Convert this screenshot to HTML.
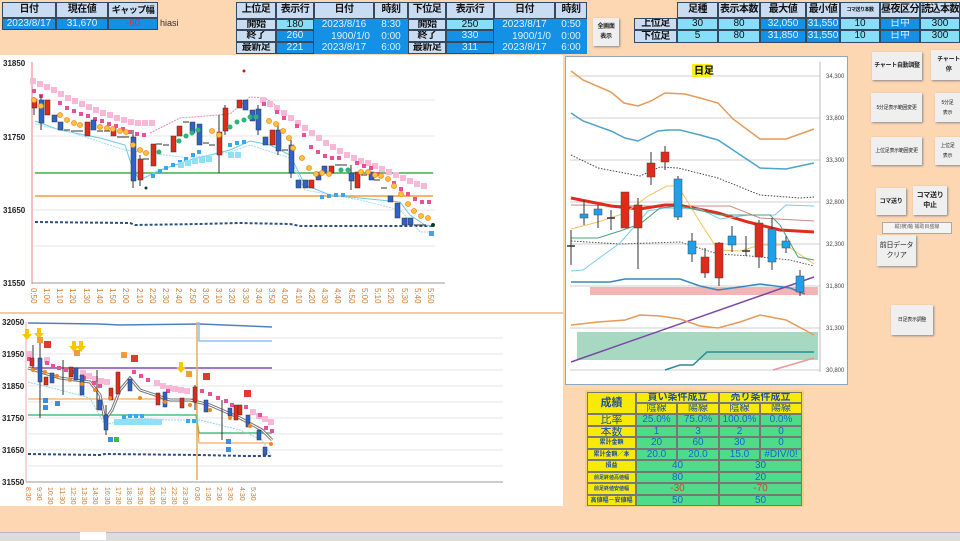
<!DOCTYPE html>
<html><head><meta charset="utf-8">
<style>
*{margin:0;padding:0}
body{width:960px;height:540px;background:#fdd6b2;position:relative;overflow:hidden;font-family:"Liberation Sans","Noto Sans CJK JP",sans-serif}
.c{position:absolute;box-sizing:border-box;font-size:10px;text-align:center;border:1px solid #34495e;white-space:nowrap;overflow:hidden}
.h{background:#c9dcf2;color:#111;font-weight:bold;font-size:10px;line-height:14px;letter-spacing:-0.5px}
.b{background:#1490e4;color:#dff1ff;line-height:10px}
.l{background:#86def8;color:#111;line-height:10px}
.btn{position:absolute;background:#efefef;box-shadow:1px 1px 2px #888;font-size:7px;text-align:center;color:#222;display:flex;align-items:center;justify-content:center;line-height:10px;font-weight:bold;white-space:nowrap;overflow:hidden;letter-spacing:-0.3px}
.t{position:absolute;box-sizing:border-box;border:1px solid #777;text-align:center;font-size:10px;color:#1d63c8;line-height:10px;overflow:hidden;white-space:nowrap}
.y{background:#f7ea08;color:#1d4fa0;font-weight:bold}
.g{background:#4fdc8a}
</style></head><body>
<div style="position:absolute;left:0;top:55px;width:563px;height:451px;background:#fff"></div>
<div style="position:absolute;left:0;top:312px;width:563px;height:2px;background:#f3c9a6"></div>
<div style="position:absolute;left:565px;top:56px;width:283px;height:329px;background:#fff;border:1px solid #8fa8c0;box-sizing:border-box"></div>
<div style="position:absolute;left:0;top:532px;width:960px;height:8px;background:#dcdcdc;border-top:1px solid #bbb"></div>
<div style="position:absolute;left:80px;top:532px;width:26px;height:8px;background:#fff"></div>

<div class="c h" style="left:2px;top:2px;width:54px;height:16px">日付</div>
<div class="c h" style="left:56px;top:2px;width:52px;height:16px">現在値</div>
<div class="c h" style="left:108px;top:2px;width:50px;height:16px;font-size:9px">ギャップ幅</div>
<div class="c b" style="left:2px;top:18px;width:54px;height:12px">2023/8/17</div>
<div class="c b" style="left:56px;top:18px;width:52px;height:12px">31,670</div>
<div class="c b" style="left:108px;top:18px;width:50px;height:12px;color:#e03030">-60</div>
<div style="position:absolute;left:160px;top:18px;font-size:9px;color:#333">hiasi</div>

<div class="c h" style="left:236px;top:2px;width:40px;height:17px">上位足</div>
<div class="c h" style="left:276px;top:2px;width:38px;height:17px">表示行</div>
<div class="c h" style="left:314px;top:2px;width:60px;height:17px">日付</div>
<div class="c h" style="left:374px;top:2px;width:34px;height:17px">時刻</div>
<div class="c h" style="left:408px;top:2px;width:38px;height:17px">下位足</div>
<div class="c h" style="left:446px;top:2px;width:48px;height:17px">表示行</div>
<div class="c h" style="left:494px;top:2px;width:61px;height:17px">日付</div>
<div class="c h" style="left:555px;top:2px;width:32px;height:17px">時刻</div>

<div class="c h" style="left:236px;top:19px;width:40px;height:11px;line-height:9px">開始</div>
<div class="c l" style="left:276px;top:19px;width:38px;height:11px;line-height:9px">180</div>
<div class="c b" style="left:314px;top:19px;width:94px;height:35px;border:none"></div>
<div class="c h" style="left:236px;top:30px;width:40px;height:12px;line-height:10px">終了</div>
<div class="c b" style="left:276px;top:30px;width:38px;height:12px">260</div>
<div class="c h" style="left:236px;top:42px;width:40px;height:12px;line-height:10px">最新足</div>
<div class="c b" style="left:276px;top:42px;width:38px;height:12px">221</div>
<div style="position:absolute;left:314px;top:19px;width:94px;font-size:10px;color:#dff1ff;line-height:11.7px">
<div style="display:flex"><span style="width:60px;text-align:center">2023/8/16</span><span style="width:34px;text-align:center">8:30</span></div>
<div style="display:flex"><span style="width:60px;text-align:right;padding-right:4px;box-sizing:border-box">1900/1/0</span><span style="width:34px;text-align:center">0:00</span></div>
<div style="display:flex"><span style="width:60px;text-align:center">2023/8/17</span><span style="width:34px;text-align:center">6:00</span></div></div>

<div class="c h" style="left:408px;top:19px;width:38px;height:11px;line-height:9px">開始</div>
<div class="c l" style="left:446px;top:19px;width:48px;height:11px;line-height:9px">250</div>
<div class="c h" style="left:408px;top:30px;width:38px;height:12px;line-height:10px">終了</div>
<div class="c b" style="left:446px;top:30px;width:48px;height:12px">330</div>
<div class="c h" style="left:408px;top:42px;width:38px;height:12px;line-height:10px">最新足</div>
<div class="c b" style="left:446px;top:42px;width:48px;height:12px">311</div>
<div class="c b" style="left:494px;top:19px;width:93px;height:35px;border:none"></div>
<div style="position:absolute;left:494px;top:19px;width:93px;font-size:10px;color:#dff1ff;line-height:11.7px">
<div style="display:flex"><span style="width:61px;text-align:center">2023/8/17</span><span style="width:32px;text-align:center">0:50</span></div>
<div style="display:flex"><span style="width:61px;text-align:right;padding-right:4px;box-sizing:border-box">1900/1/0</span><span style="width:32px;text-align:center">0:00</span></div>
<div style="display:flex"><span style="width:61px;text-align:center">2023/8/17</span><span style="width:32px;text-align:center">6:00</span></div></div>

<div class="btn" style="left:593px;top:18px;width:26px;height:28px;font-size:6px">全画面<br>表示</div>

<div class="c h" style="left:677px;top:2px;width:41px;height:16px">足種</div>
<div class="c h" style="left:718px;top:2px;width:42px;height:16px">表示本数</div>
<div class="c h" style="left:760px;top:2px;width:46px;height:16px">最大値</div>
<div class="c h" style="left:806px;top:2px;width:34px;height:16px">最小値</div>
<div class="c h" style="left:840px;top:2px;width:40px;height:16px;font-size:5px">コマ送り本数</div>
<div class="c h" style="left:880px;top:2px;width:40px;height:16px">昼夜区分</div>
<div class="c h" style="left:920px;top:2px;width:40px;height:16px">読込本数</div>
<div class="c h" style="left:634px;top:18px;width:43px;height:12px;line-height:10px">上位足</div>
<div class="c l" style="left:677px;top:18px;width:41px;height:12px">30</div>
<div class="c l" style="left:718px;top:18px;width:42px;height:12px">80</div>
<div class="c b" style="left:760px;top:18px;width:46px;height:12px">32,050</div>
<div class="c b" style="left:806px;top:18px;width:34px;height:12px">31,550</div>
<div class="c l" style="left:840px;top:18px;width:40px;height:12px">10</div>
<div class="c b" style="left:880px;top:18px;width:40px;height:12px">日中</div>
<div class="c l" style="left:920px;top:18px;width:40px;height:12px">300</div>
<div class="c h" style="left:634px;top:30px;width:43px;height:13px;line-height:11px">下位足</div>
<div class="c l" style="left:677px;top:30px;width:41px;height:13px">5</div>
<div class="c l" style="left:718px;top:30px;width:42px;height:13px">80</div>
<div class="c b" style="left:760px;top:30px;width:46px;height:13px">31,850</div>
<div class="c b" style="left:806px;top:30px;width:34px;height:13px">31,550</div>
<div class="c l" style="left:840px;top:30px;width:40px;height:13px">10</div>
<div class="c b" style="left:880px;top:30px;width:40px;height:13px">日中</div>
<div class="c l" style="left:920px;top:30px;width:40px;height:13px">300</div>

<div class="btn" style="left:872px;top:52px;width:50px;height:28px;font-size:6px">チャート自動調整</div>
<div class="btn" style="left:931px;top:50px;width:29px;height:30px;justify-content:flex-end;font-size:6px">チャート<br>停</div>
<div class="btn" style="left:871px;top:93px;width:51px;height:29px;font-weight:normal;font-size:5px">5分足表示範囲変更</div>
<div class="btn" style="left:935px;top:93px;width:25px;height:29px;font-weight:normal;font-size:5px">5分足<br>表示</div>
<div class="btn" style="left:871px;top:137px;width:51px;height:28px;font-weight:normal;font-size:5px">上位足表示範囲変更</div>
<div class="btn" style="left:935px;top:137px;width:25px;height:28px;font-weight:normal;font-size:5px">上位足<br>表示</div>
<div class="btn" style="left:876px;top:188px;width:30px;height:27px;font-size:6px">コマ送り</div>
<div class="btn" style="left:913px;top:186px;width:34px;height:29px;font-size:7px">コマ送り<br>中止</div>
<div style="position:absolute;left:882px;top:222px;width:68px;height:10px;background:#f4f4f4;border:1px solid #aaa;font-size:5px;color:#666;text-align:center;line-height:9px;white-space:nowrap;overflow:hidden">縦(横)軸 補助目盛線</div>
<div class="btn" style="left:877px;top:235px;width:39px;height:31px;font-weight:normal;font-size:7px">前日データ<br>クリア</div>
<div class="btn" style="left:891px;top:305px;width:42px;height:30px;font-weight:normal;font-size:5px">日足表示調整</div>

<div style="position:absolute;left:585px;top:390px;width:219px;height:117px;background:#f2d27a"></div>
<div class="t y" style="left:587px;top:392px;width:49px;height:22px;line-height:20px;font-size:11px">成績</div>
<div class="t y" style="left:636px;top:392px;width:83px;height:11px">買い条件成立</div>
<div class="t y" style="left:719px;top:392px;width:83px;height:11px">売り条件成立</div>
<div class="t y" style="left:636px;top:403px;width:41px;height:11px;font-weight:normal">陰線</div>
<div class="t y" style="left:677px;top:403px;width:42px;height:11px;font-weight:normal">陽線</div>
<div class="t y" style="left:719px;top:403px;width:41px;height:11px;font-weight:normal">陰線</div>
<div class="t y" style="left:760px;top:403px;width:42px;height:11px;font-weight:normal">陽線</div>
<div class="t y" style="left:587px;top:414px;width:49px;height:12px;font-size:11px;font-weight:normal">比率</div>
<div class="t g" style="left:636px;top:414px;width:41px;height:12px">25.0%</div>
<div class="t g" style="left:677px;top:414px;width:42px;height:12px">75.0%</div>
<div class="t g" style="left:719px;top:414px;width:41px;height:12px">100.0%</div>
<div class="t g" style="left:760px;top:414px;width:42px;height:12px">0.0%</div>
<div class="t y" style="left:587px;top:426px;width:49px;height:11px;font-size:11px;font-weight:normal">本数</div>
<div class="t g" style="left:636px;top:426px;width:41px;height:11px">1</div>
<div class="t g" style="left:677px;top:426px;width:42px;height:11px">3</div>
<div class="t g" style="left:719px;top:426px;width:41px;height:11px">2</div>
<div class="t g" style="left:760px;top:426px;width:42px;height:11px">0</div>
<div class="t y" style="left:587px;top:437px;width:49px;height:12px;font-size:6px">累計金額</div>
<div class="t g" style="left:636px;top:437px;width:41px;height:12px">20</div>
<div class="t g" style="left:677px;top:437px;width:42px;height:12px">60</div>
<div class="t g" style="left:719px;top:437px;width:41px;height:12px">30</div>
<div class="t g" style="left:760px;top:437px;width:42px;height:12px">0</div>
<div class="t y" style="left:587px;top:449px;width:49px;height:11px;font-size:6px">累計金額／本</div>
<div class="t g" style="left:636px;top:449px;width:41px;height:11px">20.0</div>
<div class="t g" style="left:677px;top:449px;width:42px;height:11px">20.0</div>
<div class="t g" style="left:719px;top:449px;width:41px;height:11px">15.0</div>
<div class="t g" style="left:760px;top:449px;width:42px;height:11px">#DIV/0!</div>
<div class="t y" style="left:587px;top:460px;width:49px;height:12px;font-size:6px">損益</div>
<div class="t g" style="left:636px;top:460px;width:83px;height:12px">40</div>
<div class="t g" style="left:719px;top:460px;width:83px;height:12px">30</div>
<div class="t y" style="left:587px;top:472px;width:49px;height:11px;font-size:5px">前足終値高値幅</div>
<div class="t g" style="left:636px;top:472px;width:83px;height:11px">80</div>
<div class="t g" style="left:719px;top:472px;width:83px;height:11px">20</div>
<div class="t y" style="left:587px;top:483px;width:49px;height:12px;font-size:5px">前足終値安値幅</div>
<div class="t g" style="left:636px;top:483px;width:83px;height:12px;color:#d8402a">-30</div>
<div class="t g" style="left:719px;top:483px;width:83px;height:12px;color:#d8402a">-70</div>
<div class="t y" style="left:587px;top:495px;width:49px;height:11px;font-size:6px">高値幅－安値幅</div>
<div class="t g" style="left:636px;top:495px;width:83px;height:11px">50</div>
<div class="t g" style="left:719px;top:495px;width:83px;height:11px">50</div>

<svg width="960" height="540" style="position:absolute;left:0;top:0" font-family="Liberation Sans, sans-serif">
<g stroke="#e4e4e4" stroke-width="1">
<line x1="33" y1="100" x2="435" y2="100"/><line x1="33" y1="136" x2="435" y2="136"/><line x1="33" y1="173" x2="435" y2="173"/><line x1="33" y1="210" x2="435" y2="210"/><line x1="33" y1="246" x2="435" y2="246"/>
</g>
<line x1="32" y1="62" x2="32" y2="284" stroke="#f2a8a8" stroke-width="1.5"/>
<line x1="32" y1="283" x2="445" y2="283" stroke="#999"/>
<g font-size="8" fill="#222" font-weight="bold"><text x="3" y="66">31850</text><text x="3" y="140">31750</text><text x="3" y="213">31650</text><text x="3" y="286">31550</text></g>
<line x1="35" y1="173" x2="433" y2="173" stroke="#3cb04a" stroke-width="1.5"/>
<line x1="35" y1="196" x2="433" y2="196" stroke="#f59a3c" stroke-width="1.5"/>
<polyline fill="none" stroke="#2c4f86" stroke-width="2" stroke-dasharray="3 2" points="35,222 130,223 135,225 200,224 240,223 290,224 300,226 400,226 433,226"/>
<polyline fill="none" stroke="#6cc7e8" stroke-width="1" points="35,121 60,130 100,138 125,145 133,170 140,180 160,170 190,160 230,150 250,141 270,145 290,155 305,185 330,195 400,202 410,215 425,225 433,226"/>
<polyline fill="none" stroke="#9fdcf0" stroke-width="1" stroke-dasharray="2 1" points="35,124 70,132 125,150 190,158 230,152 250,145 290,158 305,190 360,200 400,210 420,232 433,232"/>
<polyline fill="none" stroke="#e98ab8" stroke-width="1" stroke-dasharray="2 1" points="150,133 180,118 230,114 250,97 265,98 280,108"/>
<g fill="#f8b9d8"><rect x="30" y="78" width="6" height="6"/><rect x="37" y="81" width="6" height="6"/><rect x="44" y="84" width="6" height="6"/><rect x="51" y="87" width="6" height="6"/><rect x="58" y="91" width="6" height="6"/><rect x="65" y="95" width="6" height="6"/><rect x="72" y="98" width="6" height="6"/><rect x="79" y="101" width="6" height="6"/><rect x="86" y="104" width="6" height="6"/><rect x="93" y="107" width="6" height="6"/><rect x="100" y="110" width="6" height="6"/><rect x="107" y="112" width="6" height="6"/><rect x="114" y="115" width="6" height="6"/><rect x="121" y="117" width="6" height="6"/><rect x="128" y="119" width="6" height="6"/><rect x="135" y="120" width="6" height="6"/><rect x="142" y="120" width="6" height="6"/><rect x="149" y="120" width="6" height="6"/>
<rect x="260" y="97" width="6" height="6"/><rect x="267" y="101" width="6" height="6"/><rect x="274" y="105" width="6" height="6"/><rect x="281" y="110" width="6" height="6"/><rect x="288" y="115" width="6" height="6"/><rect x="295" y="120" width="6" height="6"/><rect x="302" y="125" width="6" height="6"/><rect x="309" y="130" width="6" height="6"/><rect x="316" y="135" width="6" height="6"/><rect x="323" y="140" width="6" height="6"/><rect x="330" y="144" width="6" height="6"/><rect x="337" y="148" width="6" height="6"/><rect x="344" y="152" width="6" height="6"/><rect x="351" y="155" width="6" height="6"/><rect x="358" y="158" width="6" height="6"/><rect x="365" y="160" width="6" height="6"/><rect x="372" y="163" width="6" height="6"/><rect x="379" y="166" width="6" height="6"/><rect x="386" y="169" width="6" height="6"/><rect x="393" y="172" width="6" height="6"/><rect x="400" y="175" width="6" height="6"/><rect x="407" y="178" width="6" height="6"/><rect x="414" y="181" width="6" height="6"/><rect x="421" y="183" width="6" height="6"/></g>
<g fill="#ea4f98"><rect x="32" y="89" width="4" height="4"/><rect x="39" y="94" width="4" height="4"/><rect x="58" y="101" width="4" height="4"/><rect x="65" y="106" width="4" height="4"/><rect x="72" y="109" width="4" height="4"/><rect x="79" y="112" width="4" height="4"/><rect x="86" y="114" width="4" height="4"/><rect x="93" y="117" width="4" height="4"/><rect x="100" y="119" width="4" height="4"/><rect x="107" y="122" width="4" height="4"/><rect x="114" y="124" width="4" height="4"/><rect x="121" y="127" width="4" height="4"/><rect x="128" y="130" width="4" height="4"/><rect x="135" y="132" width="4" height="4"/><rect x="142" y="133" width="4" height="4"/>
<rect x="262" y="102" width="4" height="4"/><rect x="275" y="110" width="4" height="4"/><rect x="282" y="116" width="4" height="4"/><rect x="295" y="124" width="4" height="4"/><rect x="302" y="133" width="4" height="4"/><rect x="309" y="145" width="4" height="4"/><rect x="316" y="150" width="4" height="4"/><rect x="323" y="154" width="4" height="4"/><rect x="330" y="156" width="4" height="4"/><rect x="337" y="156" width="4" height="4"/><rect x="355" y="161" width="4" height="4"/><rect x="362" y="164" width="4" height="4"/><rect x="369" y="166" width="4" height="4"/><rect x="376" y="172" width="4" height="4"/><rect x="392" y="181" width="4" height="4"/><rect x="399" y="187" width="4" height="4"/><rect x="406" y="192" width="4" height="4"/><rect x="413" y="197" width="4" height="4"/><rect x="420" y="200" width="4" height="4"/><rect x="427" y="200" width="4" height="4"/></g>
<g fill="#3aa7e8"><rect x="151" y="174" width="4" height="4"/><rect x="158" y="169" width="4" height="4"/><rect x="164" y="166" width="4" height="4"/><rect x="171" y="163" width="4" height="4"/><rect x="178" y="160" width="4" height="4"/><rect x="184" y="157" width="4" height="4"/><rect x="191" y="153" width="4" height="4"/><rect x="197" y="150" width="4" height="4"/><rect x="228" y="143" width="4" height="4"/><rect x="235" y="141" width="4" height="4"/><rect x="242" y="140" width="4" height="4"/><rect x="320" y="195" width="4" height="4"/><rect x="327" y="194" width="4" height="4"/><rect x="334" y="193" width="4" height="4"/><rect x="341" y="193" width="4" height="4"/><rect x="429" y="231" width="5" height="5"/></g>
<g fill="#8ee0f8"><rect x="178" y="162" width="6" height="6"/><rect x="185" y="160" width="6" height="6"/><rect x="192" y="158" width="6" height="6"/><rect x="199" y="157" width="6" height="6"/><rect x="206" y="156" width="6" height="6"/><rect x="228" y="152" width="6" height="6"/><rect x="235" y="152" width="6" height="6"/></g>
<g stroke="#333" stroke-width="1">
<line x1="34" y1="97" x2="34" y2="115"/><line x1="41" y1="95" x2="41" y2="130"/><line x1="133" y1="130" x2="133" y2="188"/><line x1="140" y1="155" x2="140" y2="186"/><line x1="219" y1="115" x2="219" y2="173"/><line x1="225" y1="105" x2="225" y2="135"/><line x1="258" y1="105" x2="258" y2="135"/><line x1="278" y1="125" x2="278" y2="155"/><line x1="291" y1="140" x2="291" y2="178"/><line x1="351" y1="165" x2="351" y2="190"/>
<line x1="64" y1="130" x2="70" y2="130"/><line x1="71" y1="131" x2="77" y2="131"/><line x1="77" y1="131" x2="83" y2="131"/><line x1="97" y1="131" x2="103" y2="131"/><line x1="104" y1="131" x2="110" y2="131"/><line x1="117" y1="137" x2="123" y2="137"/><line x1="123" y1="137" x2="129" y2="137"/><line x1="143" y1="159" x2="149" y2="159"/><line x1="156" y1="144" x2="162" y2="144"/><line x1="163" y1="145" x2="169" y2="145"/><line x1="183" y1="122" x2="189" y2="122"/><line x1="203" y1="143" x2="209" y2="143"/><line x1="209" y1="145" x2="215" y2="145"/><line x1="282" y1="150" x2="288" y2="150"/><line x1="335" y1="165" x2="341" y2="165"/><line x1="341" y1="165" x2="347" y2="165"/><line x1="361" y1="175" x2="367" y2="175"/><line x1="374" y1="180" x2="380" y2="180"/><line x1="381" y1="188" x2="387" y2="188"/><line x1="414" y1="225" x2="420" y2="225"/><line x1="420" y1="225" x2="426" y2="225"/></g>
<g fill="#e02b1b" stroke="#333" stroke-width=".5"><rect x="32" y="99" width="5" height="9"/><rect x="45" y="100" width="5" height="15"/><rect x="85" y="122" width="5" height="14"/><rect x="111" y="128" width="5" height="8"/><rect x="138" y="159" width="5" height="21"/><rect x="151" y="144" width="5" height="22"/><rect x="171" y="136" width="5" height="16"/><rect x="177" y="126" width="5" height="10"/><rect x="217" y="132" width="5" height="23"/><rect x="223" y="108" width="5" height="23"/><rect x="237" y="100" width="5" height="8"/><rect x="270" y="130" width="5" height="15"/><rect x="309" y="180" width="5" height="8"/><rect x="329" y="166" width="5" height="7"/><rect x="355" y="172" width="5" height="16"/></g>
<g fill="#2f62c8" stroke="#333" stroke-width=".5"><rect x="39" y="100" width="5" height="23"/><rect x="52" y="115" width="5" height="7"/><rect x="58" y="122" width="5" height="8"/><rect x="91" y="120" width="5" height="10"/><rect x="131" y="137" width="5" height="44"/><rect x="190" y="122" width="5" height="11"/><rect x="197" y="124" width="5" height="21"/><rect x="243" y="100" width="5" height="10"/><rect x="250" y="110" width="5" height="11"/><rect x="256" y="109" width="5" height="21"/><rect x="263" y="137" width="5" height="8"/><rect x="276" y="130" width="5" height="21"/><rect x="289" y="145" width="5" height="28"/><rect x="296" y="180" width="5" height="8"/><rect x="303" y="180" width="5" height="8"/><rect x="316" y="172" width="5" height="8"/><rect x="322" y="166" width="5" height="7"/><rect x="349" y="173" width="5" height="8"/><rect x="369" y="172" width="5" height="8"/><rect x="388" y="196" width="5" height="6"/><rect x="395" y="203" width="5" height="15"/><rect x="402" y="218" width="5" height="7"/><rect x="408" y="218" width="5" height="7"/></g>
<g fill="#fcc33a" stroke="#f08a20" stroke-width=".8"><circle cx="34" cy="100" r="2.5"/><circle cx="41" cy="106" r="2.5"/><circle cx="60" cy="115" r="2.5"/><circle cx="67" cy="120" r="2.5"/><circle cx="74" cy="123" r="2.5"/><circle cx="80" cy="125" r="2.5"/><circle cx="100" cy="127" r="2.5"/><circle cx="107" cy="128" r="2.5"/><circle cx="113" cy="129" r="2.5"/><circle cx="120" cy="131" r="2.5"/><circle cx="126" cy="132" r="2.5"/><circle cx="133" cy="145" r="2.5"/><circle cx="140" cy="150" r="2.5"/><circle cx="146" cy="153" r="2.5"/><circle cx="212" cy="131" r="2.5"/><circle cx="219" cy="135" r="2.5"/><circle cx="269" cy="121" r="2.5"/><circle cx="276" cy="124" r="2.5"/><circle cx="283" cy="131" r="2.5"/><circle cx="289" cy="138" r="2.5"/><circle cx="293" cy="148" r="2.5"/><circle cx="302" cy="158" r="2.5"/><circle cx="309" cy="168" r="2.5"/><circle cx="316" cy="174" r="2.5"/><circle cx="322" cy="173" r="2.5"/><circle cx="329" cy="174" r="2.5"/><circle cx="361" cy="172" r="2.5"/><circle cx="368" cy="172" r="2.5"/><circle cx="375" cy="175" r="2.5"/><circle cx="381" cy="176" r="2.5"/><circle cx="388" cy="179" r="2.5"/><circle cx="394" cy="186" r="2.5"/><circle cx="401" cy="194" r="2.5"/><circle cx="408" cy="204" r="2.5"/><circle cx="414" cy="211" r="2.5"/><circle cx="421" cy="216" r="2.5"/><circle cx="428" cy="218" r="2.5"/></g>
<g fill="#2fb37a"><circle cx="159" cy="152" r="2.5"/><circle cx="179" cy="141" r="2.5"/><circle cx="186" cy="136" r="2.5"/><circle cx="192" cy="133" r="2.5"/><circle cx="198" cy="130" r="2.5"/><circle cx="230" cy="127" r="2.5"/><circle cx="237" cy="122" r="2.5"/><circle cx="244" cy="120" r="2.5"/><circle cx="250" cy="117" r="2.5"/><circle cx="256" cy="117" r="2.5"/><circle cx="341" cy="170" r="2.5"/><circle cx="348" cy="170" r="2.5"/></g>
<circle cx="146" cy="188" r="1.5" fill="#104020"/><circle cx="244" cy="71" r="1.5" fill="#d01818"/><circle cx="433" cy="225" r="2" fill="#104020"/>
<g font-size="8" fill="#d07a2a"><text transform="translate(31,288) rotate(90)">0:50</text><text transform="translate(44,288) rotate(90)">1:00</text><text transform="translate(57,288) rotate(90)">1:10</text><text transform="translate(70,288) rotate(90)">1:20</text><text transform="translate(84,288) rotate(90)">1:30</text><text transform="translate(97,288) rotate(90)">1:40</text><text transform="translate(110,288) rotate(90)">1:50</text><text transform="translate(123,288) rotate(90)">2:00</text><text transform="translate(137,288) rotate(90)">2:10</text><text transform="translate(150,288) rotate(90)">2:20</text><text transform="translate(163,288) rotate(90)">2:30</text><text transform="translate(176,288) rotate(90)">2:40</text><text transform="translate(190,288) rotate(90)">2:50</text><text transform="translate(203,288) rotate(90)">3:00</text><text transform="translate(216,288) rotate(90)">3:10</text><text transform="translate(229,288) rotate(90)">3:20</text><text transform="translate(243,288) rotate(90)">3:30</text><text transform="translate(256,288) rotate(90)">3:40</text><text transform="translate(269,288) rotate(90)">3:50</text><text transform="translate(282,288) rotate(90)">4:00</text><text transform="translate(296,288) rotate(90)">4:10</text><text transform="translate(309,288) rotate(90)">4:20</text><text transform="translate(322,288) rotate(90)">4:30</text><text transform="translate(335,288) rotate(90)">4:40</text><text transform="translate(349,288) rotate(90)">4:50</text><text transform="translate(362,288) rotate(90)">5:00</text><text transform="translate(375,288) rotate(90)">5:10</text><text transform="translate(388,288) rotate(90)">5:20</text><text transform="translate(402,288) rotate(90)">5:30</text><text transform="translate(415,288) rotate(90)">5:40</text><text transform="translate(428,288) rotate(90)">5:50</text></g>

<g stroke="#e6e6e6"><line x1="28" y1="338" x2="503" y2="338"/><line x1="28" y1="354" x2="503" y2="354"/><line x1="28" y1="370" x2="503" y2="370"/><line x1="28" y1="386" x2="503" y2="386"/><line x1="28" y1="402" x2="503" y2="402"/><line x1="28" y1="418" x2="503" y2="418"/><line x1="28" y1="434" x2="503" y2="434"/><line x1="28" y1="450" x2="503" y2="450"/><line x1="28" y1="466" x2="503" y2="466"/></g>
<line x1="26" y1="322" x2="26" y2="482" stroke="#f2a8a8"/>
<line x1="26" y1="482" x2="503" y2="482" stroke="#999"/>
<g font-size="8" fill="#222" font-weight="bold"><text x="2" y="325">32050</text><text x="2" y="357">31950</text><text x="2" y="389">31850</text><text x="2" y="421">31750</text><text x="2" y="453">31650</text><text x="2" y="485">31550</text></g>
<polyline fill="none" stroke="#4f7fc0" stroke-width="1.5" points="28,323 100,324 120,325 200,324 272,327"/>
<polyline fill="none" stroke="#8ec4ec" stroke-width="1.5" points="199,322 199,341 272,341"/>
<line x1="28" y1="368" x2="272" y2="368" stroke="#7f4fa8" stroke-width="1.5"/>
<line x1="197" y1="322" x2="197" y2="480" stroke="#e2b25a" stroke-width="1.5"/>
<polyline fill="none" stroke="#4cbf86" stroke-width="1.5" points="28,415 196,415 199,433 272,433"/>
<polyline fill="none" stroke="#f59a3c" stroke-width="1" points="28,399 196,399 199,443 272,443"/>
<polyline fill="none" stroke="#2c4f86" stroke-width="2" stroke-dasharray="3 2" points="28,454 100,455 105,454 200,455 245,456 272,456"/>
<polyline fill="none" stroke="#777" stroke-width="3" points="28,368 60,378 90,382 100,395 105,420 112,410 120,390 130,378 140,390 170,400 190,400 210,405 240,418 262,430 272,440"/>
<polyline fill="none" stroke="#fff" stroke-width="1" points="28,368 60,378 90,382 100,395 105,420 112,410 120,390 130,378 140,390 170,400 190,400 210,405 240,418 262,430 272,440"/>
<polyline fill="none" stroke="#8fd6f0" stroke-width="1" stroke-dasharray="2 1" points="28,382 60,390 90,398 105,425 130,418 170,420 200,420 240,430 262,440 272,457"/>
<g fill="#f8b9d8"><rect x="26" y="351" width="6" height="6"/><rect x="44" y="357" width="6" height="6"/><rect x="80" y="370" width="6" height="6"/><rect x="86" y="373" width="6" height="6"/><rect x="92" y="376" width="6" height="6"/><rect x="98" y="378" width="6" height="6"/><rect x="104" y="379" width="6" height="6"/><rect x="154" y="380" width="6" height="6"/><rect x="160" y="383" width="6" height="6"/><rect x="166" y="385" width="6" height="6"/><rect x="172" y="386" width="6" height="6"/><rect x="178" y="387" width="6" height="6"/><rect x="184" y="388" width="6" height="6"/><rect x="250" y="409" width="6" height="6"/><rect x="256" y="413" width="6" height="6"/><rect x="262" y="416" width="6" height="6"/><rect x="268" y="419" width="6" height="6"/></g>
<g fill="#ea4f98"><rect x="27" y="357" width="4" height="4"/><rect x="45" y="361" width="4" height="4"/><rect x="51" y="364" width="4" height="4"/><rect x="57" y="366" width="4" height="4"/><rect x="64" y="368" width="4" height="4"/><rect x="70" y="370" width="4" height="4"/><rect x="82" y="376" width="4" height="4"/><rect x="92" y="381" width="4" height="4"/><rect x="98" y="384" width="4" height="4"/><rect x="132" y="370" width="4" height="4"/><rect x="139" y="374" width="4" height="4"/><rect x="146" y="378" width="4" height="4"/><rect x="166" y="389" width="4" height="4"/><rect x="200" y="389" width="4" height="4"/><rect x="208" y="392" width="4" height="4"/><rect x="216" y="396" width="4" height="4"/><rect x="224" y="399" width="4" height="4"/><rect x="230" y="403" width="4" height="4"/><rect x="244" y="405" width="4" height="4"/><rect x="258" y="413" width="4" height="4"/><rect x="264" y="426" width="4" height="4"/><rect x="270" y="429" width="4" height="4"/></g>
<g fill="#8ee0f8"><rect x="114" y="419" width="6" height="6"/><rect x="120" y="419" width="6" height="6"/><rect x="126" y="419" width="6" height="6"/><rect x="132" y="419" width="6" height="6"/><rect x="138" y="419" width="6" height="6"/><rect x="144" y="419" width="6" height="6"/><rect x="150" y="419" width="6" height="6"/><rect x="156" y="419" width="6" height="6"/></g>
<g fill="#3aa7e8"><rect x="122" y="415" width="4" height="4"/><rect x="128" y="414" width="4" height="4"/><rect x="134" y="414" width="4" height="4"/><rect x="140" y="414" width="4" height="4"/><rect x="186" y="419" width="4" height="4"/><rect x="192" y="419" width="4" height="4"/></g>
<g stroke="#333" stroke-width="1"><line x1="40" y1="340" x2="40" y2="418"/><line x1="33" y1="345" x2="33" y2="370"/><line x1="63" y1="360" x2="63" y2="395"/><line x1="97" y1="370" x2="97" y2="410"/><line x1="106" y1="405" x2="106" y2="435"/><line x1="195" y1="385" x2="195" y2="410"/><line x1="222" y1="400" x2="222" y2="440"/></g>
<g fill="#e02b1b" stroke="#333" stroke-width=".5"><rect x="30" y="358" width="4" height="8"/><rect x="44" y="377" width="4" height="8"/><rect x="69" y="367" width="4" height="10"/><rect x="109" y="388" width="4" height="12"/><rect x="116" y="372" width="4" height="22"/><rect x="156" y="393" width="4" height="12"/><rect x="180" y="398" width="4" height="10"/><rect x="193" y="387" width="4" height="15"/><rect x="234" y="405" width="4" height="15"/><rect x="238" y="405" width="4" height="10"/></g>
<g fill="#2f62c8" stroke="#333" stroke-width=".5"><rect x="38" y="358" width="4" height="24"/><rect x="50" y="373" width="4" height="10"/><rect x="74" y="368" width="4" height="12"/><rect x="80" y="375" width="4" height="20"/><rect x="98" y="400" width="4" height="10"/><rect x="104" y="415" width="4" height="15"/><rect x="128" y="379" width="4" height="12"/><rect x="163" y="392" width="4" height="15"/><rect x="204" y="400" width="4" height="12"/><rect x="228" y="408" width="4" height="8"/><rect x="246" y="415" width="4" height="12"/><rect x="257" y="430" width="4" height="10"/><rect x="263" y="447" width="4" height="8"/></g>
<g fill="#f08a20"><circle cx="33" cy="370" r="2"/><circle cx="45" cy="372" r="2"/><circle cx="57" cy="376" r="2"/><circle cx="70" cy="380" r="2"/><circle cx="82" cy="384" r="2"/><circle cx="95" cy="390" r="2"/><circle cx="110" cy="398" r="2"/><circle cx="140" cy="398" r="2"/><circle cx="165" cy="402" r="2"/><circle cx="190" cy="405" r="2"/><circle cx="210" cy="410" r="2"/><circle cx="230" cy="418" r="2"/><circle cx="250" cy="426" r="2"/><circle cx="271" cy="444" r="2"/></g>
<g fill="#f5c800"><path d="M25,329h4v5h3l-5,6l-5,-6h3z"/><path d="M37,328h4v5h3l-5,6l-5,-6h3z"/><path d="M72,341h4v5h3l-5,6l-5,-6h3z"/><path d="M79,341h4v5h3l-5,6l-5,-6h3z"/><path d="M179,362h4v5h3l-5,6l-5,-6h3z"/></g>
<g fill="#e03a2a"><rect x="44" y="341" width="7" height="7"/><rect x="131" y="355" width="7" height="7"/><rect x="203" y="373" width="7" height="7"/><rect x="244" y="390" width="7" height="7"/></g>
<g fill="#f39a3a"><rect x="37" y="337" width="6" height="6"/><rect x="74" y="350" width="6" height="6"/><rect x="121" y="352" width="6" height="6"/><rect x="186" y="371" width="6" height="6"/></g>
<g fill="#3a8ee0"><rect x="43" y="398" width="5" height="5"/><rect x="43" y="405" width="5" height="5"/><rect x="55" y="401" width="5" height="5"/><rect x="108" y="437" width="5" height="5"/><rect x="226" y="439" width="5" height="5"/><rect x="226" y="447" width="5" height="5"/></g>
<rect x="114" y="437" width="5" height="5" fill="#3bbb4a"/>
<g font-size="7" fill="#d07a2a"><text transform="translate(26,487) rotate(90)">8:30</text><text transform="translate(37,487) rotate(90)">9:30</text><text transform="translate(48,487) rotate(90)">10:30</text><text transform="translate(60,487) rotate(90)">11:30</text><text transform="translate(71,487) rotate(90)">12:30</text><text transform="translate(82,487) rotate(90)">13:30</text><text transform="translate(93,487) rotate(90)">14:30</text><text transform="translate(105,487) rotate(90)">16:30</text><text transform="translate(116,487) rotate(90)">17:30</text><text transform="translate(127,487) rotate(90)">18:30</text><text transform="translate(138,487) rotate(90)">19:30</text><text transform="translate(150,487) rotate(90)">20:30</text><text transform="translate(161,487) rotate(90)">21:30</text><text transform="translate(172,487) rotate(90)">22:30</text><text transform="translate(183,487) rotate(90)">23:30</text><text transform="translate(195,487) rotate(90)">0:30</text><text transform="translate(206,487) rotate(90)">1:30</text><text transform="translate(217,487) rotate(90)">2:30</text><text transform="translate(228,487) rotate(90)">3:30</text><text transform="translate(240,487) rotate(90)">4:30</text><text transform="translate(251,487) rotate(90)">5:30</text></g>

<g stroke="#cfcfcf"><line x1="570" y1="76" x2="820" y2="76"/><line x1="570" y1="118" x2="820" y2="118"/><line x1="570" y1="160" x2="820" y2="160"/><line x1="570" y1="202" x2="820" y2="202"/><line x1="570" y1="244" x2="820" y2="244"/><line x1="570" y1="286" x2="820" y2="286"/><line x1="570" y1="328" x2="820" y2="328"/><line x1="570" y1="370" x2="820" y2="370"/></g>
<line x1="820" y1="62" x2="820" y2="372" stroke="#bbb"/>
<g font-size="6" fill="#444"><text x="826" y="78">34,300</text><text x="826" y="120">33,800</text><text x="826" y="162">33,300</text><text x="826" y="204">32,800</text><text x="826" y="246">32,300</text><text x="826" y="288">31,800</text><text x="826" y="330">31,300</text><text x="826" y="372">30,800</text></g>
<rect x="692" y="64" width="19" height="13" fill="#f7ee1a"/><text x="694" y="74" font-size="10" font-weight="bold" font-family="Liberation Sans, Noto Sans CJK JP, sans-serif">日足</text>
<rect x="577" y="332" width="241" height="28" fill="#a6d8c2"/>
<rect x="590" y="287" width="228" height="8" fill="#f2b4b4"/>
<g fill="none">
<polyline stroke="#e69a58" stroke-width="1.5" points="571,71 583,80 611,92 624,103 638,106 651,101 665,93 685,94 700,98 718,103 733,119 760,139 786,139 814,129"/>
<polyline stroke="#4ea3c9" stroke-width="1.5" points="571,113 583,121 611,131 625,138 638,141 658,131 668,130 680,130 700,135 718,140 733,150 760,168 786,169 814,163"/>
<polyline stroke="#444" stroke-dasharray="1.5 1.5" points="571,155 598,168 640,176 660,167 678,168 718,178 760,195 800,198 814,197"/>
<polyline stroke="#c88" points="571,205 650,206 730,206 760,218 814,221"/>
<polyline stroke="#e02a1e" stroke-width="3" points="571,198 611,206 640,209 665,205 678,205 718,213 748,222 780,230 814,232"/>
<polyline stroke="#555" stroke-dasharray="1.5 1.5" points="571,241 620,244 680,242 718,254 750,256 790,260 814,266"/>
<polyline stroke="#7cc9ea" points="571,271 583,270 598,259 620,243 648,211 665,208 700,209 720,219 748,215 775,215 786,205 814,206"/>
<polyline stroke="#f2c260" points="571,229 598,222 625,213 648,196 667,186 678,186 700,222 718,250 740,251 760,245 786,245 814,264"/>
<polyline stroke="#4aa07a" points="571,238 598,238 620,231 640,224 660,208 680,206 720,215 770,215 780,225 798,257 814,260"/>
<polyline stroke="#3a88b8" stroke-width="1.5" points="571,282 610,282 625,279 680,279 700,286 718,290 740,287 760,284 790,288 805,294"/>
<polyline stroke="#7b48a8" stroke-width="1.5" points="571,362 814,277"/>
<polyline stroke="#e69a58" stroke-width="1.5" points="571,325 598,322 625,320 640,315 660,316 680,319 700,326 718,328 740,322 760,315 786,320 814,335"/>
<polyline stroke="#2a8a9a" stroke-width="1.5" points="665,370 680,365 693,365 707,352 814,352"/>
<polyline stroke="#e59aa0" stroke-width="1.5" points="773,370 814,358"/>
</g>
<g stroke="#333"><line x1="571" y1="230" x2="571" y2="265"/><line x1="584" y1="200" x2="584" y2="225"/><line x1="598" y1="205" x2="598" y2="228"/><line x1="611" y1="210" x2="611" y2="230"/><line x1="638" y1="198" x2="638" y2="269"/><line x1="651" y1="152" x2="651" y2="185"/><line x1="665" y1="146" x2="665" y2="170"/><line x1="678" y1="176" x2="678" y2="220"/><line x1="692" y1="233" x2="692" y2="262"/><line x1="705" y1="248" x2="705" y2="278"/><line x1="719" y1="242" x2="719" y2="286"/><line x1="732" y1="226" x2="732" y2="252"/><line x1="746" y1="236" x2="746" y2="256"/><line x1="759" y1="220" x2="759" y2="268"/><line x1="772" y1="218" x2="772" y2="270"/><line x1="786" y1="236" x2="786" y2="253"/><line x1="800" y1="270" x2="800" y2="296"/></g>
<g stroke="#333" stroke-width="1.5"><line x1="567" y1="246" x2="575" y2="246"/><line x1="607" y1="218" x2="615" y2="218"/><line x1="742" y1="251" x2="750" y2="251"/></g>
<g fill="#e02b1b" stroke="#444" stroke-width=".5"><rect x="621" y="192" width="8" height="36"/><rect x="634" y="205" width="8" height="23"/><rect x="647" y="163" width="8" height="14"/><rect x="661" y="152" width="8" height="10"/><rect x="701" y="257" width="8" height="16"/><rect x="715" y="243" width="8" height="35"/><rect x="755" y="223" width="8" height="34"/></g>
<g fill="#1fa0ea" stroke="#444" stroke-width=".5"><rect x="580" y="214" width="8" height="4"/><rect x="594" y="209" width="8" height="6"/><rect x="674" y="179" width="8" height="38"/><rect x="688" y="241" width="8" height="13"/><rect x="728" y="236" width="8" height="9"/><rect x="768" y="229" width="8" height="33"/><rect x="782" y="241" width="8" height="7"/><rect x="796" y="276" width="8" height="16"/></g>
</svg>
</body></html>
